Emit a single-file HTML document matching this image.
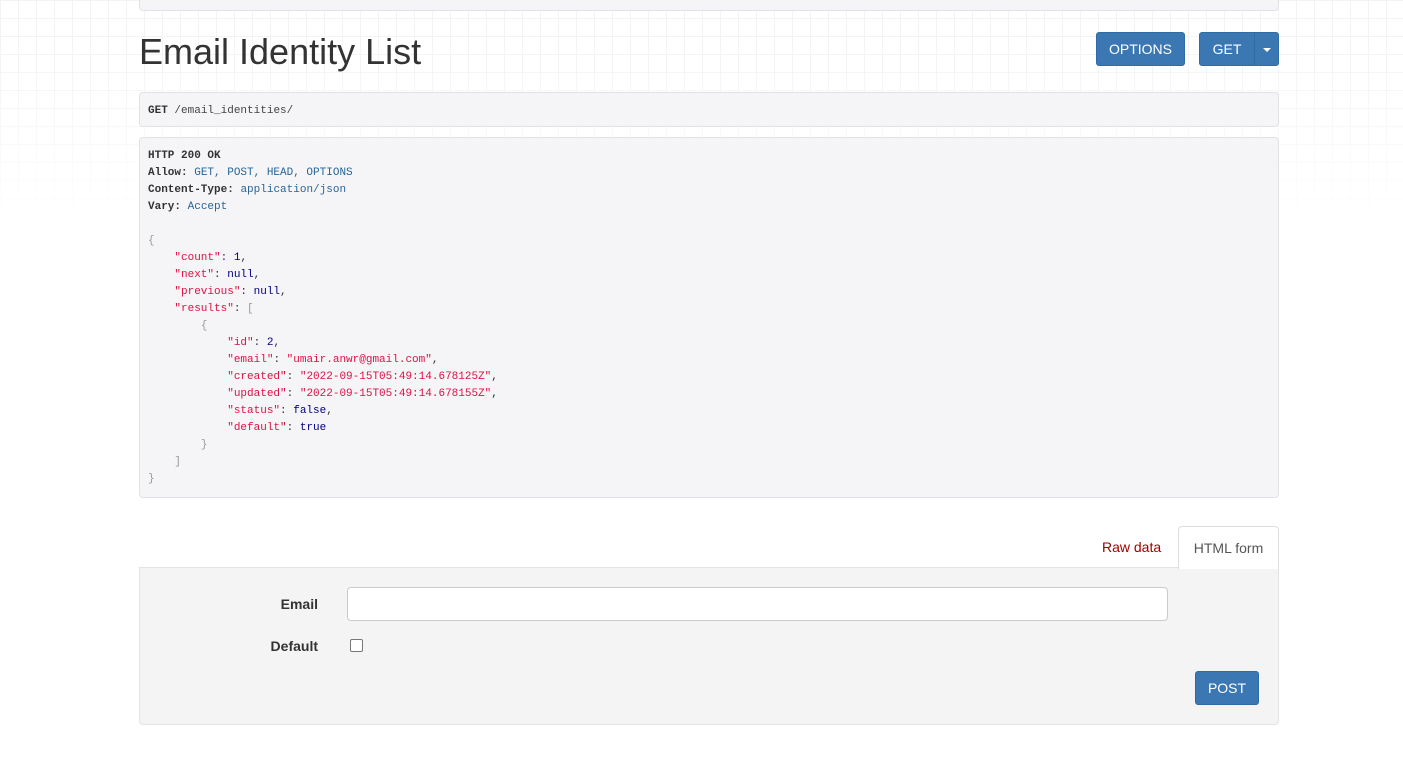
<!DOCTYPE html>
<html><head><meta charset="utf-8"><style>
*{box-sizing:border-box}
body{margin:0;width:1403px;height:771px;overflow:hidden;background:#fff;font-family:"Liberation Sans",Arial,sans-serif;color:#333;position:relative}
.grid{position:absolute;left:0;top:0;width:1403px;height:230px;
background-image:linear-gradient(#eee 1px,transparent 1px),linear-gradient(90deg,#eee 1px,transparent 1px);
background-size:18px 18px;
-webkit-mask-image:linear-gradient(#000 20%,transparent 100%);mask-image:linear-gradient(#000 20%,transparent 100%);opacity:.7}
.c{position:absolute;left:139px;width:1140px}
.well{background:#f5f5f7;border:1px solid #e1e1e8;border-radius:4px}
pre{margin:0;font-family:"Liberation Mono",monospace;font-size:11px;line-height:17px;color:#333;white-space:pre}
b{font-weight:bold}
.m{color:#2a6496}.s{color:#d14}.n{color:#000080}.p{color:#999}.lt{color:#444}
.btn{position:absolute;background:#3b78b3;border:1px solid #2e6da4;color:#fff;border-radius:3px;font-size:14px;text-align:center}
h1{position:absolute;left:139px;top:30px;margin:0;font-weight:400;font-size:36px;color:#333;line-height:44px}
</style></head><body>
<div class="grid"></div>
<div class="c well" style="top:-10px;height:21px"></div>
<h1>Email Identity List</h1>
<div class="btn" style="left:1096px;top:32px;width:89px;height:34px;line-height:32px">OPTIONS</div>
<div class="btn" style="left:1199px;top:32px;width:80px;height:34px;line-height:32px"><span style="position:absolute;left:0;width:54px">GET</span><span style="position:absolute;left:54px;top:0;bottom:0;border-left:1px solid #2e6da4;width:25px"><span style="position:absolute;left:8px;top:15px;border-left:4px solid transparent;border-right:4px solid transparent;border-top:4px solid #fff"></span></span></div>
<div class="c well" style="top:92px;height:35px;padding:10px 8px 0"><pre><b>GET</b> <span class="lt">/email_identities/</span></pre></div>
<div class="c well" style="top:137px;height:361px;padding:10px 8px 0"><pre><b>HTTP 200 OK</b>
<b>Allow:</b> <span class="m">GET, POST, HEAD, OPTIONS</span>
<b>Content-Type:</b> <span class="m">application/json</span>
<b>Vary:</b> <span class="m">Accept</span>

<span class="p">{</span>
    <span class="s">"count"</span>: <span class="n">1</span>,
    <span class="s">"next"</span>: <span class="n">null</span>,
    <span class="s">"previous"</span>: <span class="n">null</span>,
    <span class="s">"results"</span>: <span class="p">[</span>
        <span class="p">{</span>
            <span class="s">"id"</span>: <span class="n">2</span>,
            <span class="s">"email"</span>: <span class="s">"umair.anwr@gmail.com"</span>,
            <span class="s">"created"</span>: <span class="s">"2022-09-15T05:49:14.678125Z"</span>,
            <span class="s">"updated"</span>: <span class="s">"2022-09-15T05:49:14.678155Z"</span>,
            <span class="s">"status"</span>: <span class="n">false</span>,
            <span class="s">"default"</span>: <span class="n">true</span>
        <span class="p">}</span>
    <span class="p">]</span>
<span class="p">}</span></pre></div>
<div style="position:absolute;left:1102px;top:539px;font-size:14px;color:#a30000">Raw data</div>
<div style="position:absolute;left:1178px;top:526px;width:101px;height:43px;background:#fff;border:1px solid #ddd;border-bottom:none;border-radius:4px 4px 0 0;font-size:14px;color:#555;text-align:center;line-height:42px;z-index:2">HTML form</div>
<div class="c" style="top:567px;height:158px;background:#f4f4f4;border:1px solid #e3e3e3;border-radius:0 0 4px 4px"></div>
<div style="position:absolute;left:200px;width:118px;text-align:right;top:596px;font-size:14px;font-weight:bold">Email</div>
<div style="position:absolute;left:347px;top:587px;width:821px;height:34px;background:#fff;border:1px solid #ccc;border-radius:4px"></div>
<div style="position:absolute;left:200px;width:118px;text-align:right;top:638px;font-size:14px;font-weight:bold">Default</div>
<div style="position:absolute;left:350px;top:639px;width:13px;height:13px;background:#fff;border:1px solid #777;border-radius:2px"></div>
<div class="btn" style="left:1195px;top:671px;width:64px;height:34px;line-height:32px">POST</div>
</body></html>
